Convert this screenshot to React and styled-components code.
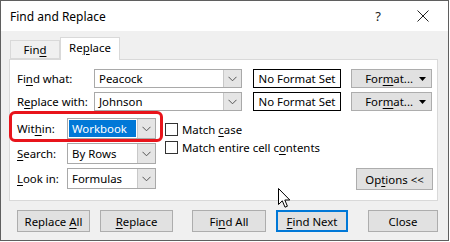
import React from "react";
import styled, { createGlobalStyle } from "styled-components";

const Global = createGlobalStyle`
  html, body { margin: 0; padding: 0; background: #ffffff; }
  body { font-family: "Noto Sans", "Open Sans", sans-serif; font-size: 11.4px; color: #000; }
  * { box-sizing: border-box; }
`;

const Dialog = styled.div`
  width: 449px;
  height: 241px;
  border: 1px solid #5f5f5f;
  background: #f0f0f0;
  display: flex;
  flex-direction: column;
  position: relative;
`;

const TitleBar = styled.div`
  height: 30px;
  background: #ffffff;
  display: flex;
  align-items: center;
  padding: 0 0 0 9px;
  font-size: 12px;
`;

const TitleText = styled.div`
  flex: 1;
`;

const TitleButton = styled.div`
  width: ${(p) => p.w}px;
  margin-right: ${(p) => p.mr || 0}px;
  display: flex;
  justify-content: center;
  color: #222;
  font-size: 13px;
`;

const Body = styled.div`
  padding: 6px 10px 0 8px;
  display: flex;
  flex-direction: column;
`;

const Tabs = styled.div`
  display: flex;
  align-items: flex-end;
  height: 22px;
  padding-left: 1px;
  position: relative;
  z-index: 1;
`;

const Tab = styled.div`
  width: ${(p) => p.w}px;
  height: ${(p) => (p.active ? 23 : 19)}px;
  margin-bottom: ${(p) => (p.active ? -1 : 0)}px;
  background: ${(p) => (p.active ? "#ffffff" : "#f0f0f0")};
  border: 1px solid #d9d9d9;
  border-bottom: ${(p) => (p.active ? "none" : "1px solid #d9d9d9")};
  display: flex;
  align-items: center;
  justify-content: center;
  padding-bottom: ${(p) => (p.active ? 3 : 0)}px;
`;

const Panel = styled.div`
  width: 429px;
  height: 142px;
  background: #ffffff;
  border: 1px solid #d9d9d9;
  padding: 9px 0 0 7px;
  display: flex;
  flex-direction: column;
`;

const Row = styled.div`
  display: flex;
  align-items: center;
  height: 19px;
  margin-bottom: 4px;
`;

const Label = styled.div`
  width: ${(p) => p.w}px;
  white-space: nowrap;
`;

const Combo = styled.div`
  width: ${(p) => p.w}px;
  height: ${(p) => p.h || 19}px;
  border: 1px solid #a9a9a9;
  background: #ffffff;
  display: flex;
  align-items: stretch;
`;

const ComboText = styled.div`
  flex: 1;
  display: flex;
  align-items: center;
  padding: ${(p) => (p.selected ? "1px" : "0 0 0 4px")};
`;

const Selected = styled.span`
  background: #0078d7;
  color: #ffffff;
  height: 100%;
  width: 100%;
  display: flex;
  align-items: center;
  padding-left: 3px;
`;

const DropBtn = styled.div`
  width: 18px;
  border-left: 1px solid #c8c8c8;
  background: ${(p) => (p.shaded ? "#e5e5e5" : "#ffffff")};
  display: flex;
  align-items: center;
  justify-content: center;
`;

const FormatBox = styled.div`
  width: 88px;
  height: 19px;
  margin-left: 11px;
  border: 1px solid #000;
  background: #fff;
  display: flex;
  align-items: center;
  justify-content: center;
`;

const Button = styled.div`
  width: ${(p) => p.w}px;
  height: ${(p) => p.h || 22}px;
  margin-left: ${(p) => p.ml || 0}px;
  margin-bottom: ${(p) => p.mb || 0}px;
  background: #e1e1e1;
  border: ${(p) => (p.def ? "2px solid #0078d7" : "1px solid #adadad")};
  display: flex;
  align-items: center;
  justify-content: center;
  white-space: nowrap;
`;

const FormatButton = styled(Button)`
  justify-content: flex-end;
  padding-right: 5px;
  gap: 6px;
`;

const Lower = styled.div`
  display: flex;
`;

const LeftCol = styled.div`
  display: flex;
  flex-direction: column;
  padding-top: 3px;
`;

const ComboRow = styled.div`
  display: flex;
  align-items: center;
  height: 21px;
  margin-bottom: 4px;
  position: relative;
`;

const Highlight = styled.div`
  position: absolute;
  left: -8px;
  top: -7px;
  width: 154px;
  height: 31px;
  border: 3px solid #e8141b;
  border-radius: 6px;
  pointer-events: none;
`;

const CheckCol = styled.div`
  display: flex;
  flex-direction: column;
  margin-left: 9px;
  padding-top: 5px;
`;

const CheckRow = styled.div`
  display: flex;
  align-items: center;
  height: 18px;
  white-space: nowrap;
`;

const Box = styled.div`
  width: 13px;
  height: 13px;
  border: 1px solid #333;
  background: #fff;
  margin-right: 4px;
`;

const OptionsWrap = styled.div`
  flex: 1;
  display: flex;
  justify-content: flex-end;
  align-items: flex-end;
  padding-right: 4px;
`;

const Footer = styled.div`
  display: flex;
  padding: 9px 0 0 8px;
`;

const U = styled.u`
  text-decoration: underline;
  text-underline-offset: 2px;
  text-decoration-thickness: 1px;
`;

const Cursor = styled.svg`
  position: absolute;
  left: 277px;
  top: 187px;
`;

const Chevron = () => (
  <svg width="9" height="6" viewBox="0 0 9 6">
    <path d="M0.5 0.8 L4.5 4.8 L8.5 0.8" fill="none" stroke="#555" strokeWidth="1" />
  </svg>
);

const Tri = () => (
  <svg width="7" height="4" viewBox="0 0 7 4">
    <path d="M0 0 L7 0 L3.5 4 Z" fill="#000" />
  </svg>
);

export default function App() {
  return (
    <>
      <Global />
      <Dialog>
        <TitleBar>
          <TitleText>Find and Replace</TitleText>
          <TitleButton w={14} mr={24}>?</TitleButton>
          <TitleButton w={28} mr={11}>
            <svg width="12" height="12" viewBox="0 0 12 12">
              <path d="M0.5 0.5 L11.5 11.5 M11.5 0.5 L0.5 11.5" stroke="#222" strokeWidth="1" />
            </svg>
          </TitleButton>
        </TitleBar>
        <Body>
          <Tabs>
            <Tab w={50}><span>Fin<U>d</U></span></Tab>
            <Tab w={60} active><span>Re<U>p</U>lace</span></Tab>
          </Tabs>
          <Panel>
            <Row>
              <Label w={77}>Fi<U>n</U>d what:</Label>
              <Combo w={148}>
                <ComboText>Peacock</ComboText>
                <DropBtn shaded><Chevron /></DropBtn>
              </Combo>
              <FormatBox>No Format Set</FormatBox>
              <FormatButton w={81} h={19} ml={10}>
                <span>For<U>m</U>at...</span>
                <Tri />
              </FormatButton>
            </Row>
            <Row>
              <Label w={77}>R<U>e</U>place with:</Label>
              <Combo w={148}>
                <ComboText>Johnson</ComboText>
                <DropBtn shaded><Chevron /></DropBtn>
              </Combo>
              <FormatBox>No Format Set</FormatBox>
              <FormatButton w={81} h={19} ml={10}>
                <span>For<U>m</U>at...</span>
                <Tri />
              </FormatButton>
            </Row>
            <Lower>
              <LeftCol>
                <ComboRow>
                  <Highlight />
                  <Label w={50}>Wit<U>h</U>in:</Label>
                  <Combo w={89} h={21}>
                    <ComboText selected><Selected>Workbook</Selected></ComboText>
                    <DropBtn shaded><Chevron /></DropBtn>
                  </Combo>
                </ComboRow>
                <ComboRow>
                  <Label w={50}><U>S</U>earch:</Label>
                  <Combo w={89} h={21}>
                    <ComboText>By Rows</ComboText>
                    <DropBtn shaded><Chevron /></DropBtn>
                  </Combo>
                </ComboRow>
                <ComboRow>
                  <Label w={50}><U>L</U>ook in:</Label>
                  <Combo w={89} h={21}>
                    <ComboText>Formulas</ComboText>
                    <DropBtn shaded><Chevron /></DropBtn>
                  </Combo>
                </ComboRow>
              </LeftCol>
              <CheckCol>
                <CheckRow><Box /><span>Match <U>c</U>ase</span></CheckRow>
                <CheckRow><Box /><span>Match entire cell c<U>o</U>ntents</span></CheckRow>
              </CheckCol>
              <OptionsWrap>
                <Button w={77} h={22} mb={3}><span>Op<U>t</U>ions &lt;&lt;</span></Button>
              </OptionsWrap>
            </Lower>
          </Panel>
          <Footer>
            <Button w={73}><span>Replace <U>A</U>ll</span></Button>
            <Button w={73} ml={10}><span><U>R</U>eplace</span></Button>
            <Button w={74} ml={19}><span>Fi<U>n</U>d All</span></Button>
            <Button w={72} ml={10} def><span><U>F</U>ind Next</span></Button>
            <Button w={70} ml={20}>Close</Button>
          </Footer>
        </Body>
        <Cursor width="13" height="21" viewBox="0 0 13 21">
          <path d="M0.5 0.5 L0.5 16.5 L4.3 12.8 L7 19.2 L9.4 18.2 L6.8 12 L11.8 12 Z" fill="#fff" stroke="#000" strokeWidth="1" strokeLinejoin="miter" />
        </Cursor>
      </Dialog>
    </>
  );
}
